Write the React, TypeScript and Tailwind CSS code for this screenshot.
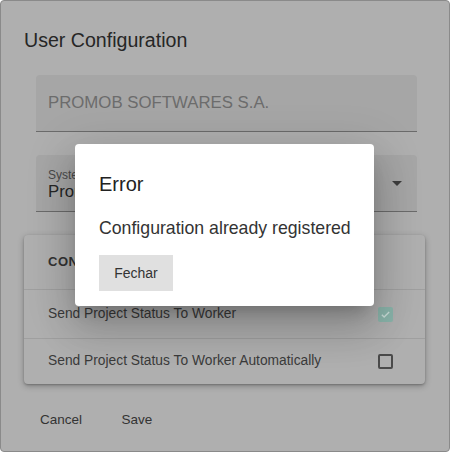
import React from 'react';

const font = { fontFamily: '"Liberation Sans", Arial, sans-serif' };

const Check: React.FC<{ checked?: boolean }> = ({ checked }) =>
  checked ? (
    <div className="w-[15px] h-[15px] rounded-[2px] bg-[#8ab4aa] flex items-center justify-center">
      <svg width="11" height="11" viewBox="0 0 24 24" fill="none" stroke="#c9dcd7" strokeWidth="3">
        <path d="M4 12.5l5 5L20 6.5" />
      </svg>
    </div>
  ) : (
    <div className="w-[15px] h-[15px] rounded-[2px] border-2 border-[#4a4a4a]" />
  );

export default function App() {
  return (
    <div
      className="relative w-[450px] h-[452px] overflow-hidden bg-[#afafaf] border border-[#8a8a8a] rounded-[4px]"
      style={font}
    >
      <div className="flex flex-col">
        <h2 className="pt-[23px] px-[23px] h-[56px] leading-8 text-[19.6px] text-[#262626]">User Configuration</h2>

        <div className="mt-[18px] ml-[35px] mr-[32px] h-[57px] bg-[#a6a6a6] rounded-t-[4px] border-b border-[#6b6b6b] flex items-center px-[12px]">
          <span className="text-[16.8px] text-[#6c6c6c]">PROMOB SOFTWARES S.A.</span>
        </div>

        <div className="mt-[23px] ml-[35px] mr-[32px] h-[57px] bg-[#a6a6a6] rounded-t-[4px] border-b border-[#6b6b6b] flex items-center px-[12px]">
          <div className="flex-1 flex flex-col pt-[4px]">
            <span className="text-[12px] leading-[14px] text-[#4a4a4a]">System</span>
            <span className="text-[16.8px] leading-[20px] text-[#262626]">Promob Manager</span>
          </div>
          <svg width="24" height="24" viewBox="0 0 24 24" className="mr-[-4px]">
            <path d="M7 10l5 5 5-5z" fill="#3d3d3d" />
          </svg>
        </div>

        <div className="mt-[23px] ml-[23px] mr-[24px] bg-[#afafaf] rounded-[4px] shadow-[0_2px_6px_rgba(0,0,0,0.28),0_1px_2px_rgba(0,0,0,0.2)]">
          <div className="h-[55px] flex items-center px-[24px] border-b border-[#9f9f9f]">
            <span className="text-[13px] font-bold tracking-[0.5px] text-[#333]">CONFIGURATIONS</span>
          </div>
          <div className="h-[49px] flex items-center justify-between pl-[24px] pr-[32px] border-b border-[#9f9f9f]">
            <span className="text-[13.8px] text-[#3b3b3b]">Send Project Status To Worker</span>
            <Check checked />
          </div>
          <div className="h-[45px] flex items-center justify-between pl-[24px] pr-[32px]">
            <span className="text-[13.8px] text-[#3b3b3b]">Send Project Status To Worker Automatically</span>
            <Check />
          </div>
        </div>

        <div className="mt-[18px] pl-[28px] flex gap-3">
          <button className="min-w-[64px] h-9 text-[13.5px] text-[#333]">Cancel</button>
          <button className="min-w-[64px] h-9 text-[13.5px] text-[#333]">Save</button>
        </div>
      </div>

      <div className="absolute left-[74px] top-[143px] w-[299px] h-[162px] bg-white rounded-[4px] shadow-[0_11px_15px_-7px_rgba(0,0,0,0.2),0_24px_38px_3px_rgba(0,0,0,0.14),0_9px_46px_8px_rgba(0,0,0,0.12)] flex flex-col px-[24px]">
        <h3 className="mt-[26px] text-[20px] leading-[28px] text-[#222]">Error</h3>
        <p className="mt-[18px] text-[17.7px] leading-[24px] text-[#333] whitespace-nowrap">Configuration already registered</p>
        <div className="mt-[15px]">
          <button className="w-[74px] h-[36px] bg-[#e0e0e0] text-[14px] text-[#333]">Fechar</button>
        </div>
      </div>
    </div>
  );
}
